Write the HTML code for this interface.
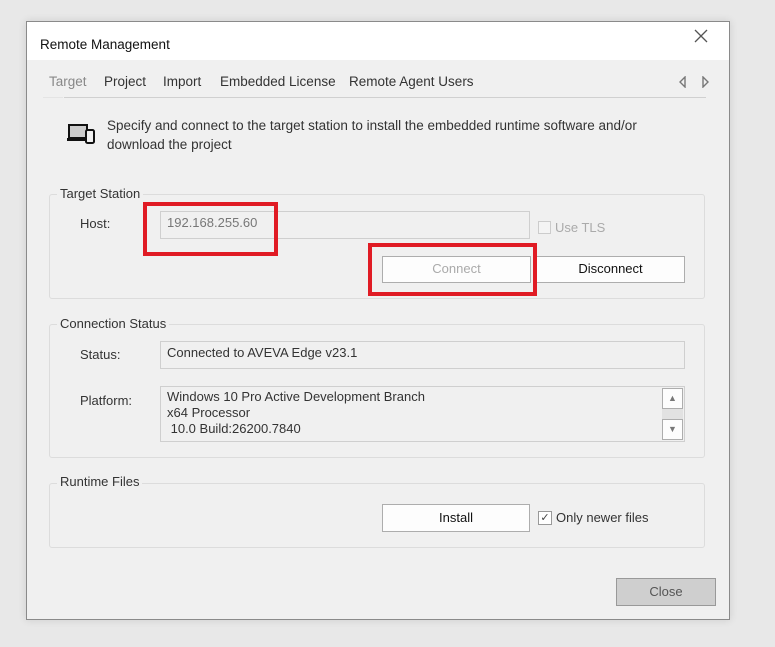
<!DOCTYPE html>
<html><head><style>
*{margin:0;padding:0;box-sizing:border-box}
body{width:775px;height:647px;background:#e8e8e8;font-family:"Liberation Sans",sans-serif;font-size:13px;color:#222;position:relative;overflow:hidden}
.a{position:absolute}
.dlg{left:26px;top:21px;width:704px;height:599px;background:#f0f0f0;border:1px solid #8a8a8a;box-shadow:0 0 8px rgba(0,0,0,.12)}
.title{left:0;top:0;width:702px;height:38px;background:#fff}
.grp{border:1px solid #dcdcdc;border-radius:3px}
.lbl{background:#f0f0f0;padding:0 3px;color:#333}
.btn{background:#fdfdfd;border:1px solid #adadad;text-align:center;line-height:24px}
.fld{border:1px solid #cfcfcf;background:#f0f0f0}
.red{border:4px solid #e01b24}
</style></head><body>
<div class="a dlg">
 <div class="a title"></div>
 <div class="a" style="left:13px;top:15px;font-size:13.5px;color:#111">Remote Management</div>
 <svg class="a" style="left:667px;top:7px" width="14" height="14"><path d="M1 1L13 13M13 1L1 13" stroke="#555" stroke-width="1.3"/></svg>
 <div class="a" style="left:22px;top:52px;color:#888;font-size:13.5px">Target</div>
 <div class="a" style="left:77px;top:52px;font-size:13.5px;color:#333">Project</div>
 <div class="a" style="left:136px;top:52px;font-size:13.5px;color:#333">Import</div>
 <div class="a" style="left:193px;top:52px;font-size:13.5px;color:#333">Embedded License</div>
 <div class="a" style="left:322px;top:52px;font-size:13.5px;color:#333">Remote Agent Users</div>
 <svg class="a" style="left:652px;top:54px" width="40" height="12"><path d="M6 1L1 6L6 11Z" fill="none" stroke="#777" stroke-width="1.4"/><path d="M24 1L29 6L24 11Z" fill="none" stroke="#777" stroke-width="1.4"/></svg>
 <div class="a" style="left:37px;top:75px;width:642px;height:1px;background:#d0d0d0"></div>
 <div class="a" style="left:16px;top:75px;width:20px;height:1px;background:#e4e4e4"></div>
 <svg class="a" style="left:40px;top:102px" width="30" height="22"><rect x="2" y="1" width="18" height="13" fill="#ccc" stroke="#111" stroke-width="2"/><rect x="0" y="14" width="22" height="3" fill="#111"/><rect x="19" y="6" width="8" height="13" rx="1.5" fill="#f0f0f0" stroke="#111" stroke-width="2"/></svg>
 <div class="a" style="left:80px;top:94px;width:580px;line-height:19px;color:#333;font-size:13.5px">Specify and connect to the target station to install the embedded runtime software and/or download the project</div>

 <div class="a grp" style="left:22px;top:172px;width:656px;height:105px"></div>
 <div class="a lbl" style="left:30px;top:164px">Target Station</div>
 <div class="a" style="left:53px;top:194px;color:#333">Host:</div>
 <div class="a fld" style="left:133px;top:189px;width:370px;height:28px"></div>
 <div class="a" style="left:140px;top:193px;color:#777">192.168.255.60</div>
 <div class="a red" style="left:116px;top:180px;width:135px;height:54px"></div>
 <div class="a" style="left:511px;top:199px;width:13px;height:13px;border:1px solid #ccc;background:#f4f4f4"></div>
 <div class="a" style="left:528px;top:198px;color:#aaa">Use TLS</div>
 <div class="a btn" style="left:355px;top:234px;width:149px;height:27px;color:#aaa">Connect</div>
 <div class="a btn" style="left:509px;top:234px;width:149px;height:27px;color:#111">Disconnect</div>
 <div class="a red" style="left:341px;top:221px;width:169px;height:53px"></div>

 <div class="a grp" style="left:22px;top:302px;width:656px;height:134px"></div>
 <div class="a lbl" style="left:30px;top:294px">Connection Status</div>
 <div class="a" style="left:53px;top:325px;color:#333">Status:</div>
 <div class="a fld" style="left:133px;top:319px;width:525px;height:28px"></div>
 <div class="a" style="left:140px;top:323px;color:#333">Connected to AVEVA Edge v23.1</div>
 <div class="a" style="left:53px;top:371px;color:#333">Platform:</div>
 <div class="a fld" style="left:133px;top:364px;width:525px;height:56px"></div>
 <div class="a" style="left:140px;top:367px;color:#333;line-height:16px">Windows 10 Pro Active Development Branch<br>x64 Processor<br>&nbsp;10.0 Build:26200.7840</div>
 <div class="a btn" style="left:635px;top:366px;width:21px;height:21px;line-height:19px;font-size:9px;color:#777">▲</div>
 <div class="a" style="left:635px;top:387px;width:21px;height:10px;background:#e2e2e2"></div>
 <div class="a btn" style="left:635px;top:397px;width:21px;height:21px;line-height:19px;font-size:9px;color:#777">▼</div>

 <div class="a grp" style="left:22px;top:461px;width:656px;height:65px"></div>
 <div class="a lbl" style="left:30px;top:452px">Runtime Files</div>
 <div class="a btn" style="left:355px;top:482px;width:148px;height:28px;line-height:26px;color:#111">Install</div>
 <div class="a" style="left:511px;top:489px;width:14px;height:14px;border:1px solid #999;background:#fff;font-size:11px;line-height:12px;text-align:center;color:#444">✓</div>
 <div class="a" style="left:529px;top:488px;color:#333">Only newer files</div>
 <div class="a btn" style="left:589px;top:556px;width:100px;height:28px;line-height:26px;background:#cfcfcf;border-color:#999;color:#555">Close</div>
</div>
</body></html>
